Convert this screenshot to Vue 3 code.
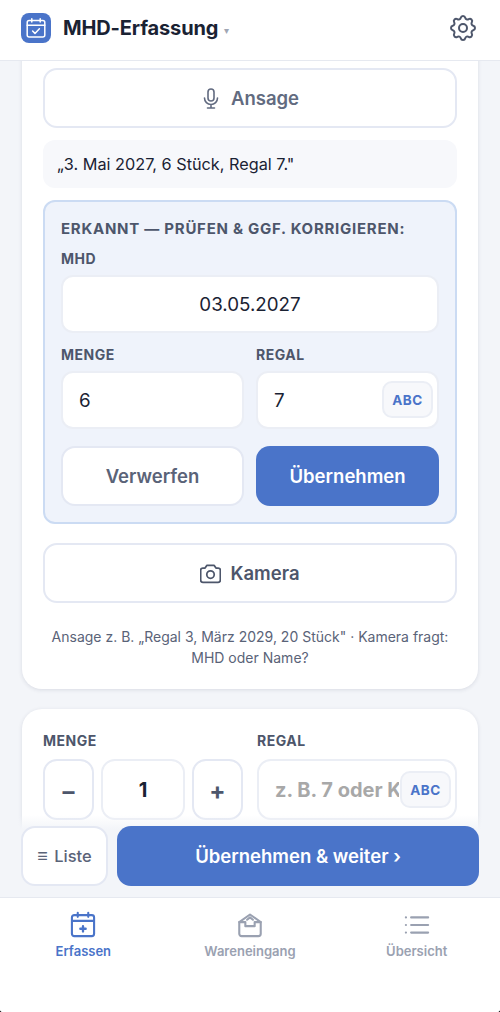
<script setup>
const tabs = [
  { label: 'Erfassen', icon: 'cal', active: true },
  { label: 'Wareneingang', icon: 'box', active: false },
  { label: 'Übersicht', icon: 'list', active: false },
]
</script>

<template>
  <div class="app">
    <header class="topbar">
      <div class="logo">
        <svg viewBox="0 0 24 24" width="24" height="24" fill="none" stroke="#fff" stroke-width="1.5" stroke-linecap="round" stroke-linejoin="round">
          <rect x="3.2" y="4.5" width="17.6" height="16.5" rx="2" />
          <path d="M3.2 9.2h17.6M7.8 2.8v3.2M16.2 2.8v3.2M8.6 15l2.4 2.4 4.4-4.6" />
        </svg>
      </div>
      <span class="title">MHD-Erfassung</span>
      <span class="caret">▾</span>
      <svg class="gear" viewBox="0 0 24 24" width="32" height="32" fill="none" stroke="#4d566b" stroke-width="1.5" stroke-linecap="round" stroke-linejoin="round">
        <path d="M10.325 4.317c.426-1.756 2.924-1.756 3.35 0a1.724 1.724 0 002.573 1.066c1.543-.94 3.31.826 2.37 2.37a1.724 1.724 0 001.065 2.572c1.756.426 1.756 2.924 0 3.35a1.724 1.724 0 00-1.066 2.573c.94 1.543-.826 3.31-2.37 2.37a1.724 1.724 0 00-2.572 1.065c-.426 1.756-2.924 1.756-3.35 0a1.724 1.724 0 00-2.573-1.066c-1.543.94-3.31-.826-2.37-2.37a1.724 1.724 0 00-1.065-2.572c-1.756-.426-1.756-2.924 0-3.35a1.724 1.724 0 001.066-2.573c-.94-1.543.826-3.31 2.37-2.37.996.608 2.296.07 2.572-1.065z" />
        <circle cx="12" cy="12" r="3" />
      </svg>
    </header>

    <main class="scroll">
      <section class="card first">
        <button class="big-btn muted">
          <svg viewBox="4 1.5 16 21" width="16" height="21" fill="none" stroke="currentColor" stroke-width="1.6" stroke-linecap="round" stroke-linejoin="round">
            <rect x="9" y="2.5" width="6" height="12" rx="3" />
            <path d="M5.5 11.500a6.500 6.500 0 0 0 13 0M12 18v3.500M8.500 21.500h7" />
          </svg>
          <span>Ansage</span>
        </button>
        <div class="quote">„3. Mai 2027, 6 Stück, Regal 7."</div>

        <div class="recognized">
          <div class="rec-title">ERKANNT — PRÜFEN &amp; GGF. KORRIGIEREN:</div>
          <label class="label mhd-label">MHD</label>
          <div class="field center">03.05.2027</div>
          <div class="two two-fields">
            <div>
              <label class="label">MENGE</label>
              <div class="field">6</div>
            </div>
            <div>
              <label class="label">REGAL</label>
              <div class="field with-abc">7<span class="abc">ABC</span></div>
            </div>
          </div>
          <div class="two two-btns">
            <button class="act ghost">Verwerfen</button>
            <button class="act primary">Übernehmen</button>
          </div>
        </div>

        <button class="big-btn camera">
          <svg viewBox="2.4 2.400 19.2 19.2" width="21" height="21" fill="none" stroke="currentColor" stroke-width="1.6" stroke-linecap="round" stroke-linejoin="round">
            <path d="M3 9a2 2 0 0 1 2-2h2l1.600-2.400h6.800L17 7h2a2 2 0 0 1 2 2v9a2 2 0 0 1-2 2H5a2 2 0 0 1-2-2z" />
            <circle cx="12" cy="13" r="3.400" />
          </svg>
          <span>Kamera</span>
        </button>
        <p class="hint">Ansage z. B. „Regal 3, März 2029, 20 Stück" · Kamera fragt: MHD oder Name?</p>
      </section>

      <section class="card second">
        <div class="qty-row">
          <div class="qty-col">
            <label class="label">MENGE</label>
            <div class="stepper">
              <button class="step">–</button>
              <div class="step-value">1</div>
              <button class="step plus">+</button>
            </div>
          </div>
          <div class="shelf-col">
            <label class="label">REGAL</label>
            <div class="shelf">
              <span class="placeholder">z. B. 7 oder K</span>
              <span class="abc abc-alt">ABC</span>
            </div>
          </div>
        </div>
      </section>

      <div class="actions">
        <button class="list-btn"><span class="lines">≡</span> Liste</button>
        <button class="next-btn">Übernehmen &amp; weiter ›</button>
      </div>
    </main>

    <nav class="tabs">
      <div v-for="t in tabs" :key="t.label" class="tab" :class="{ active: t.active }">
        <svg v-if="t.icon === 'cal'" viewBox="0 0 24 24" width="28" height="28" fill="none" stroke="currentColor" stroke-width="1.8" stroke-linecap="round" stroke-linejoin="round">
          <rect x="2.500" y="3.500" width="19" height="18" rx="2" />
          <path d="M2.500 8.500h19M7.500 1.500v3.500M16.500 1.500v3.500" />
          <path d="M12 13v4.500M9.700 15.200h4.600" stroke-width="2" />
        </svg>
        <svg v-else-if="t.icon === 'box'" viewBox="0 0 24 24" width="28" height="28" fill="none" stroke="currentColor" stroke-width="1.8" stroke-linecap="round" stroke-linejoin="round">
          <path d="M2.800 9.500 12 3l9.200 6.500V19.500a2 2 0 0 1-2 2H4.800a2 2 0 0 1-2-2z" />
          <path d="M2.800 9.500H8v3.500h8V9.500h5.200" />
          <path d="M9.500 7.500 12 5.500l2.500 2" />
        </svg>
        <svg v-else viewBox="0 0 24 24" width="28" height="28" fill="none" stroke="currentColor" stroke-width="1.9" stroke-linecap="round">
          <path d="M7 5.500h14.500M7 12h14.500M7 18.500h14.500M2.500 5.500h.01M2.500 12h.01M2.500 18.500h.01" />
        </svg>
        <span class="tab-label">{{ t.label }}</span>
      </div>
    </nav>
  </div>
</template>

<style>
html, body { margin: 0; background: #000; }
</style>

<style scoped>
.app {
  width: 500px;
  height: 1012px;
  display: flex;
  flex-direction: column;
  overflow: hidden;
  background: #f3f5f9;
  font-family: Inter, "Liberation Sans", sans-serif;
  color: #1a2233;
  border-radius: 0 0 3px 3px;
}
button { font-family: inherit; cursor: pointer; }

.topbar {
  height: 61px;
  flex: none;
  box-sizing: border-box;
  background: #fff;
  border-bottom: 1px solid #e6e9f0;
  display: flex;
  align-items: center;
  padding: 0 21px 4px 21px;
  position: relative;
  z-index: 3;
}
.logo {
  width: 30px;
  height: 30px;
  border-radius: 8px;
  background: #4a74c9;
  display: flex;
  align-items: center;
  justify-content: center;
}
.title {
  margin-left: 12px;
  font-size: 20px;
  font-weight: 700;
  letter-spacing: -.15px;
  color: #1a2233;
}
.caret {
  margin: 4px 0 0 6px;
  font-size: 10px;
  color: #a0a6b4;
}
.gear { margin-left: auto; }

.scroll {
  flex: 1;
  min-height: 0;
  position: relative;
  overflow: hidden;
}
.card {
  box-sizing: border-box;
  margin: 0 22px;
  background: #fff;
  border-radius: 20px;
  box-shadow: 0 1px 4px rgba(30, 40, 70, .12);
  padding: 0 21px;
}
.first {
  margin-top: -21px;
  padding-top: 28px;
  padding-bottom: 20px;
  height: 649px;
}
.second {
  margin-top: 20px;
  padding-top: 24px;
  height: 200px;
}

.big-btn {
  width: 100%;
  height: 60px;
  display: flex;
  align-items: center;
  justify-content: center;
  gap: 9px;
  background: #fff;
  border: 2px solid #e4e8f3;
  border-radius: 14px;
  font-size: 18.500px;
  font-weight: 600;
  color: #4d566b;
}
.big-btn.muted {
  color: #626b80;
  gap: 12px;
  padding-left: 8px;
}
.quote {
  margin-top: 12px;
  height: 48px;
  box-sizing: border-box;
  padding: 0 14px;
  display: flex;
  align-items: center;
  background: #f7f8fb;
  border-radius: 12px;
  font-size: 16.250px;
  color: #1a2233;
}
.recognized {
  margin-top: 12px;
  height: 324px;
  box-sizing: border-box;
  background: #eff3fb;
  border: 2px solid #cbdbf3;
  border-radius: 12px;
  padding: 0 16px;
}
.rec-title {
  margin-top: 17px;
  font-size: 15px;
  font-weight: 700;
  letter-spacing: .74px;
  line-height: 19px;
  color: #4d566b;
  white-space: nowrap;
}
.label {
  display: block;
  font-size: 14px;
  font-weight: 700;
  line-height: 16px;
  letter-spacing: .5px;
  color: #4d566b;
}
.mhd-label { margin-top: 13px; margin-bottom: 8px; }
.field {
  height: 58px;
  box-sizing: border-box;
  background: #fff;
  border: 2px solid #ebeef5;
  border-radius: 12px;
  display: flex;
  align-items: center;
  padding: 0 16px;
  font-size: 18.750px;
  color: #1a2233;
  position: relative;
}
.field.center { justify-content: center; }
.two {
  display: grid;
  grid-template-columns: 1fr 1fr;
  gap: 12px;
}
.two-fields { margin-top: 14px; }
.two-fields .label { margin-bottom: 8px; }
.two-btns { margin-top: 17px; }
.abc {
  position: absolute;
  right: 4px;
  top: 8px;
  width: 51px;
  height: 37px;
  box-sizing: border-box;
  display: flex;
  align-items: center;
  justify-content: center;
  background: #f7f8fb;
  border: 2px solid #ebeef5;
  border-radius: 10px;
  font-size: 13.500px;
  font-weight: 700;
  letter-spacing: .5px;
  color: #4a74c9;
}
.act {
  height: 60px;
  border-radius: 14px;
  font-size: 18.500px;
  font-weight: 600;
}
.ghost {
  background: #fff;
  border: 2px solid #e4e8f3;
  color: #5a6378;
}
.primary {
  background: #4a74c9;
  border: none;
  color: #fff;
}
.camera { margin-top: 19px; }
.hint {
  margin: 24px 0 0;
  text-align: center;
  font-size: 14px;
  line-height: 20.500px;
  color: #5a6378;
}

.qty-row {
  display: flex;
  gap: 14px;
}
.qty-col { width: 200px; flex: none; }
.shelf-col { flex: 1; }
.qty-row .label { margin-bottom: 10px; }
.stepper {
  display: flex;
  gap: 7px;
}
.step {
  width: 51px;
  height: 61px;
  padding: 4px 0 0;
  background: #fff;
  border: 2px solid #e4e8f3;
  border-radius: 14px;
  font-size: 24px;
  font-weight: 700;
  color: #4d566b;
}
.step.plus { padding-top: 1px; }
.step-value {
  flex: 1;
  box-sizing: border-box;
  border: 2px solid #ebeef5;
  border-radius: 14px;
  display: flex;
  align-items: center;
  justify-content: center;
  font-size: 20px;
  font-weight: 700;
  color: #1a2233;
}
.shelf {
  height: 61px;
  box-sizing: border-box;
  border: 2px solid #ebeef5;
  border-radius: 14px;
  position: relative;
  display: flex;
  align-items: center;
  padding-left: 16px;
  overflow: hidden;
}
.placeholder {
  width: 124px;
  overflow: hidden;
  white-space: nowrap;
  font-size: 20px;
  font-weight: 700;
  color: #a8a8a8;
}
.abc-alt { top: 10px; }

.actions {
  position: absolute;
  left: 0;
  right: 0;
  top: 754px;
  height: 82px;
  box-sizing: border-box;
  padding: 11px 21px 0;
  display: flex;
  gap: 9px;
  background: linear-gradient(to bottom, rgba(243,245,249,0), #f3f5f9 14px);
  z-index: 2;
}
.list-btn {
  width: 87px;
  height: 60px;
  padding: 0;
  background: #fff;
  border: 2px solid #e4e8f3;
  border-radius: 14px;
  font-size: 16.500px;
  font-weight: 500;
  color: #5a6378;
}
.lines { font-size: 18px; margin-right: 2px; }
.next-btn {
  flex: 1;
  height: 60px;
  background: #4a74c9;
  border: none;
  border-radius: 14px;
  font-size: 18.500px;
  font-weight: 600;
  color: #fff;
}

.tabs {
  height: 115px;
  flex: none;
  box-sizing: border-box;
  background: #fff;
  border-top: 1px solid #e6e9f0;
  display: grid;
  grid-template-columns: repeat(3, 1fr);
  position: relative;
  z-index: 3;
}
.tab {
  display: flex;
  flex-direction: column;
  align-items: center;
  padding-top: 13px;
  color: #9aa1b1;
}
.tab.active { color: #4a74c9; }
.tab-label {
  margin-top: 4px;
  font-size: 13px;
  font-weight: 600;
  line-height: 16px;
}
</style>
